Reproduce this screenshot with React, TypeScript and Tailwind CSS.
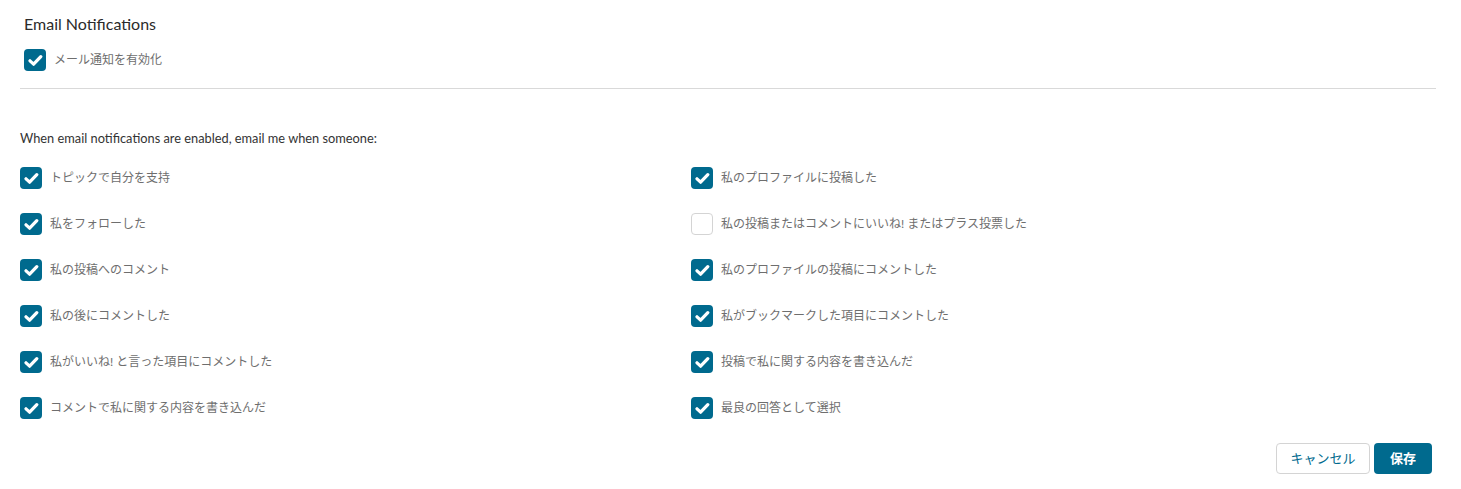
import React from 'react';

const FONT = "font-['Lato','Noto_Sans_CJK_JP',sans-serif]";

const leftItems = [
  { label: 'トピックで自分を支持', checked: true },
  { label: '私をフォローした', checked: true },
  { label: '私の投稿へのコメント', checked: true },
  { label: '私の後にコメントした', checked: true },
  { label: '私がいいね! と言った項目にコメントした', checked: true },
  { label: 'コメントで私に関する内容を書き込んだ', checked: true },
];

const rightItems = [
  { label: '私のプロファイルに投稿した', checked: true },
  { label: '私の投稿またはコメントにいいね! またはプラス投票した', checked: false },
  { label: '私のプロファイルの投稿にコメントした', checked: true },
  { label: '私がブックマークした項目にコメントした', checked: true },
  { label: '投稿で私に関する内容を書き込んだ', checked: true },
  { label: '最良の回答として選択', checked: true },
];

const Check: React.FC<{ checked: boolean; onClick: () => void }> = ({ checked, onClick }) => (
  <button
    type="button"
    onClick={onClick}
    className={
      checked
        ? 'w-[22px] h-[22px] shrink-0 rounded-[4px] bg-[#006a8e] flex items-center justify-center'
        : 'w-[22px] h-[22px] shrink-0 rounded-[4px] bg-white border border-[#d4d4d4]'
    }
  >
    {checked && (
      <svg width="15" height="13" viewBox="0 0 15 13">
        <path d="M2 6.8 L5.6 10.2 L12.8 2.6" fill="none" stroke="white" strokeWidth="3.2" strokeLinecap="round" strokeLinejoin="round" />
      </svg>
    )}
  </button>
);

const Row: React.FC<{ label: string; initial: boolean }> = ({ label, initial }) => {
  const [checked, setChecked] = React.useState(initial);
  return (
    <div className="h-[46px] flex items-center gap-2">
      <Check checked={checked} onClick={() => setChecked(!checked)} />
      <span className="text-[12px] text-[#6e6e6e]">{label}</span>
    </div>
  );
};

export default function App() {
  const [enabled, setEnabled] = React.useState(true);

  return (
    <div className={`${FONT} bg-white w-[1461px] h-[489px] pl-5 pr-[25px]`}>
      <div className="px-1 pt-[14px]">
        <h2 className="text-[16px] leading-5 text-[#2b2b2b]">Email Notifications</h2>
        <div className="mt-[15px] flex items-center gap-2">
          <Check checked={enabled} onClick={() => setEnabled(!enabled)} />
          <span className="text-[12px] text-[#6e6e6e] -mt-[1px]">メール通知を有効化</span>
        </div>
      </div>
      <div className="mt-[17px] h-px bg-[#d9d9d9]" />

      <p className="mt-[39px] text-[12.8px] leading-5 text-[#333]">
        When email notifications are enabled, email me when someone:
      </p>

      <div className="mt-[9px] grid grid-cols-[671px_1fr]">
        <div className="-mt-[2px]">
          {leftItems.map((it) => (
            <Row key={it.label} label={it.label} initial={it.checked} />
          ))}
        </div>
        <div className="-mt-[2px]">
          {rightItems.map((it) => (
            <Row key={it.label} label={it.label} initial={it.checked} />
          ))}
        </div>
      </div>

      <div className="mt-[12px] pr-[4px] flex justify-end gap-1">
        <button className="h-[31px] w-[94px] rounded-[4px] border border-[#d4d4d4] bg-white text-[13px] text-[#006a8e]">
          キャンセル
        </button>
        <button className="h-[31px] w-[58px] rounded-[4px] bg-[#006a8e] text-[13px] font-bold text-white">
          保存
        </button>
      </div>
    </div>
  );
}
